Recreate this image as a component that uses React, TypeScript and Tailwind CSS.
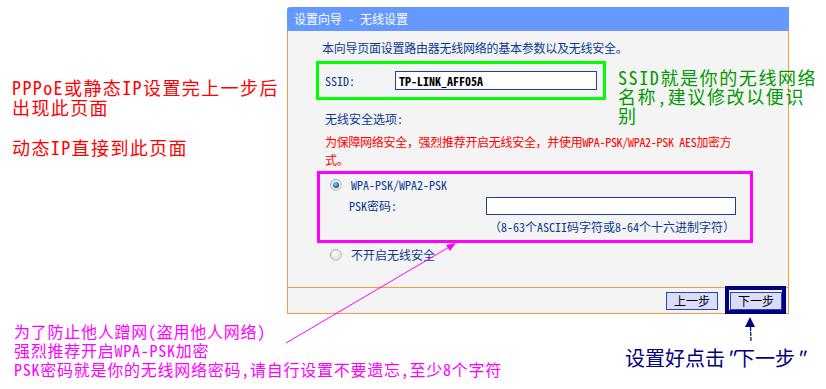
import React from "react"

const mono = "font-['Noto_Sans_Mono_CJK_SC','Noto_Sans_CJK_SC',monospace]"

function Radio({ checked }: { checked?: boolean }) {
  return (
    <svg width="12" height="12" viewBox="0 0 12 12" className="shrink-0">
      <defs>
        <linearGradient id="rg-ring" x1="0" y1="0" x2="1" y2="1">
          <stop offset="0" stopColor="#9a9a9a" />
          <stop offset="1" stopColor="#d8d8d8" />
        </linearGradient>
        <radialGradient id="rg-fill" cx="0.4" cy="0.35" r="0.7">
          <stop offset="0" stopColor="#ffffff" />
          <stop offset="1" stopColor="#d6d6d6" />
        </radialGradient>
        <radialGradient id="rg-dot" cx="0.4" cy="0.35" r="0.7">
          <stop offset="0" stopColor="#7fd0ff" />
          <stop offset="1" stopColor="#0b4a8a" />
        </radialGradient>
      </defs>
      <circle cx="6" cy="6" r="5.5" fill="url(#rg-fill)" stroke="url(#rg-ring)" strokeWidth="1" />
      {checked && <circle cx="6" cy="6" r="3" fill="url(#rg-dot)" />}
    </svg>
  )
}

function Dialog() {
  return (
    <div className={`absolute left-[287px] top-[7px] w-[502px] ${mono} text-[12px] leading-[16px] text-[#0b3a92]`}>
      {/* Title bar */}
      <div className="h-[24px] rounded-tl-[3px] bg-[#6699ff] pl-[7px] flex items-center text-white text-[12px]">
        设置向导 - 无线设置
      </div>

      {/* Body */}
      <div className="h-[256px] bg-[#f4f4f4] border-x border-[#f59a45] pt-[9px]">
        <div className="pl-[34px] tracking-[-0.25px]">本向导页面设置路由器无线网络的基本参数以及无线安全。</div>

        <div className="mt-[5px] ml-[28px] w-[290px] h-[39px] border-[3px] border-[#00ff00] flex items-center pl-[6px]">
          <span className="w-[70px]">SSID:</span>
          <div className="w-[202px] h-[19px] border border-[#1f3f9f] bg-white pl-[3px] flex items-center font-bold text-black">
            TP-LINK_AFF05A
          </div>
        </div>

        <div className="mt-[11px] pl-[37px]">无线安全选项:</div>

        <div className="mt-[6px] pl-[37px] leading-[18px] text-[#ff0000] tracking-[-0.3px]">
          <div>为保障网络安全，强烈推荐开启无线安全，并使用WPA-PSK/WPA2-PSK AES加密方</div>
          <div>式。</div>
        </div>

        <div className="mt-[2px] ml-[29px] w-[436px] h-[72px] border-[3px] border-[#ff00ff] pt-[3px]">
          <div className="flex items-center h-[16px] pl-[10px] gap-[9px]">
            <Radio checked />
            <span>WPA-PSK/WPA2-PSK</span>
          </div>
          <div className="flex items-center mt-[4px] h-[18px] pl-[29px]">
            <span className="w-[137px]">PSK密码:</span>
            <div className="w-[250px] h-[18px] border border-[#1f3f9f] bg-white" />
          </div>
          <div className="mt-[4px] pl-[169px]">（8-63个ASCII码字符或8-64个十六进制字符）</div>
        </div>

        <div className="mt-[4px] flex items-center h-[16px] pl-[42px] gap-[9px]">
          <Radio />
          <span>不开启无线安全</span>
        </div>
      </div>

      {/* Footer */}
      <div className="h-[27px] bg-[#f4f4f4] border border-[#f59a45] flex items-center justify-end pr-[6px] gap-[12px]">
        <button className="w-[52px] h-[18px] bg-[#dcdcfa] border border-[#2448b0] text-black text-[12px] leading-none">
          上一步
        </button>
        <button className="w-[52px] h-[18px] bg-[#dcdcfa] border border-[#2448b0] text-black text-[12px] leading-none">
          下一步
        </button>
      </div>
    </div>
  )
}

export default function App() {
  return (
    <div className={`relative w-[826px] h-[389px] overflow-hidden bg-white ${mono}`}>
      <Dialog />

      {/* Highlight around the next button */}
      <div className="absolute left-[725px] top-[286px] w-[61px] h-[28px] border-[4px] border-[#000080]" />

      {/* Left note */}
      <div className="absolute left-[12px] top-[77px] text-[18px] leading-[20px] tracking-[1.4px] text-[#ff0000]">
        <div>PPPoE或静态IP设置完上一步后</div>
        <div>出现此页面</div>
        <div className="mt-[20px]">动态IP直接到此页面</div>
      </div>

      {/* Right SSID note */}
      <div className="absolute left-[618px] top-[68px] text-[18px] leading-[19px] tracking-[1.6px] text-[#009900]">
        <div>SSID就是你的无线网络</div>
        <div>名称,建议修改以便识</div>
        <div>别</div>
      </div>

      {/* Bottom PSK note */}
      <div className="absolute left-[14px] top-[322px] text-[16px] leading-[19px] tracking-[0.75px] text-[#ff00ff]">
        <div>为了防止他人蹭网(盗用他人网络)</div>
        <div>强烈推荐开启WPA-PSK加密</div>
        <div>PSK密码就是你的无线网络密码,请自行设置不要遗忘,至少8个字符</div>
      </div>

      {/* Next step note */}
      <div className="absolute left-[625px] top-[347px] text-[20px] leading-[22px] text-[#000080]">
        设置好点击<span className="italic">"</span>下一步<span className="italic">"</span>
      </div>

      {/* Arrows */}
      <svg className="absolute inset-0 pointer-events-none" width="826" height="389">
        <line x1="286" y1="343" x2="451" y2="246" stroke="#ff00ff" strokeWidth="1" />
        <polygon points="456,243 450,251 446,245" fill="#ff00ff" />
        <line x1="751" y1="341" x2="750.5" y2="327" stroke="#000080" strokeWidth="1.2" strokeDasharray="4 1" />
        <polygon points="750,317 745,327 755,327" fill="#000080" />
      </svg>
    </div>
  )
}
